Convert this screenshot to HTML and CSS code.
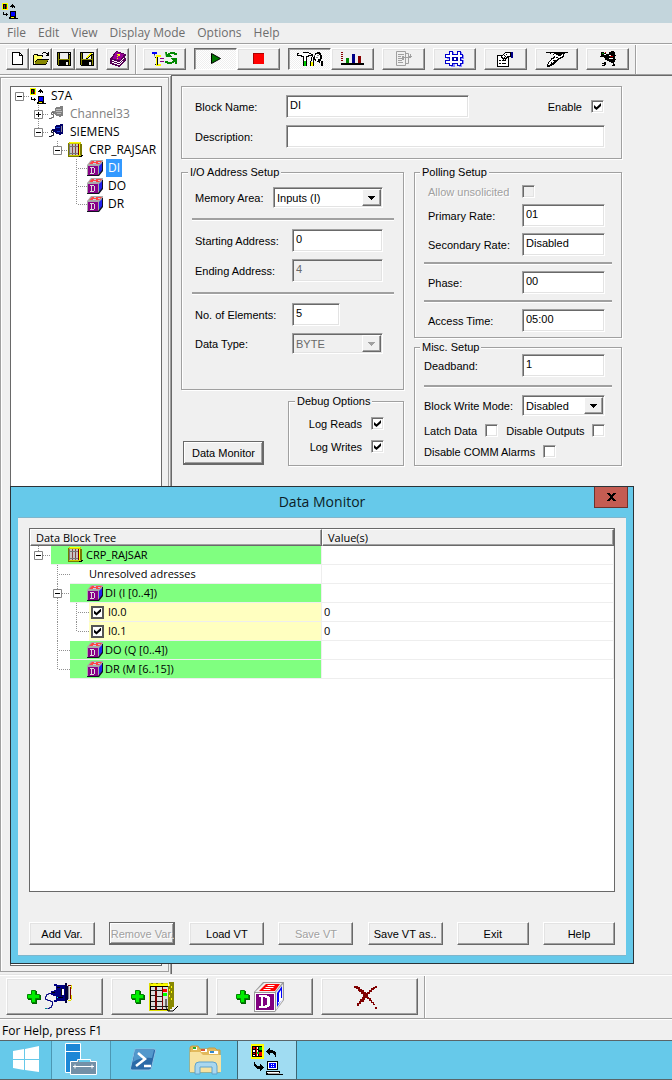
FILE: index.html
```html
<!DOCTYPE html>
<html lang="en">
<head>
<meta charset="utf-8">
<title>S7A Driver Configuration</title>
<meta name="viewport" content="width=device-width, initial-scale=1">
<link rel="stylesheet" href="styles.css">
</head>
<body>
<svg class="sprite" aria-hidden="true" shape-rendering="crispEdges">
  <symbol id="app16" viewBox="0 0 16 16">
    <path fill="#ff0" d="M0 0h6v7H0z"/><path d="M1 1h1v5H1zM3 2h1v4H3zM2 1h3v1H2z"/><path fill="#c00" d="M2 2h1v2H2zM4 4h1v2H4z"/><path fill="#080" d="M4 1h1v3H4zM2 4h1v2H2z"/>
    <path d="M8 3h1V2h1V1h1v1h1v1h1v2h-1V4h-1v1h-1V4H8zM1 9h1v2h2v-1h1v1h1v1H5v1H4v-1H1z"/>
    <path d="M8 8h6v5H8zM8 13h6v1H8zM7 14h7v1h2v1H7z"/><path fill="#00f" d="M9 9h4v4H9z"/><path fill="#ff0" d="M9 14h3v1H9z"/>
  </symbol>
  <symbol id="app32" viewBox="0 0 32 32">
    <path fill="#ff0" d="M0 0h13v15H0z"/><path d="M1 2h10v11H1z"/><path fill="#e00" d="M2 3h2v2H2zM5 3h1v9H5zM8 8h3v4H8zM2 9h2v1H2z"/><path fill="#fff" d="M2 6h2v2H2zM6 3h1v2H6zM6 6h1v2H6zM2 11h2v1H2zM6 10h1v2H6z"/><path fill="#0c0" d="M8 3h3v3H8zM6 8h2v2H6z"/>
    <path d="M15 7h1V6h1V5h1V4h1v2h3v1h2v1h1v5h-1v-2h-1v-1h-1V9h-3v2h-1v-1h-1V9h-1V8h-1zM3 18h1v2h1v1h1v1h3v-2h1v1h1v1h1v1h1v1h-1v1h-1v1h-1v1H9v-2H6v-1H5v-1H4v-1H3z"/>
    <path d="M16 17h11v9H16zM15 27h14v4H15zM29 30h3v1h-3z"/><path fill="#fff" d="M17 18h9v7h-9zM16 28h12v1H16z"/><path fill="#00f" d="M18 19h7v5h-7z"/><path fill="#fff" d="M20 20h1v1h-1zM22 20h1v1h-1zM20 22h1v1h-1zM22 22h1v1h-1z"/><path fill="#aaa" d="M17 29h12v1H17z"/>
  </symbol>
  <symbol id="plug" viewBox="0 0 16 16">
    <path fill="#000068" d="M6 2h1V1h4V0h3v10h-2v1h-2v-1H7V9H6V8H4V6H3V5h3z"/><path fill="#1a3cd0" d="M7 3h4v1H7zM8 7h3v1H8z"/><path fill="#889" d="M12 2h1v6h-1z"/><path fill="none" stroke="#112" d="M5 6.500H2.500V8.500H4.500V11.500H2.500V12.500H0"/>
  </symbol>
  <symbol id="plug-off" viewBox="0 0 16 16">
    <path fill="#808080" d="M6 2h1V1h4V0h3v10h-2v1h-2v-1H7V9H6V8H4V6H3V5h3z"/><path fill="#b8b8b8" d="M7 3h5v1H7zM7 5h6v1H7zM8 7h4v1H8z"/><path fill="none" stroke="#666" d="M5 6.500H2.500V8.500H4.500V11.500H2.500V12.500H0"/>
  </symbol>
  <symbol id="rack" viewBox="0 0 16 16">
    <path fill="#cc0" d="M1 0h12v14H1z"/><path fill="#ff0" d="M2 0h10v1H2zM11 2h1v11h-1z"/><path fill="#770" d="M12 2h2v11h-2zM0 1h1v14H0zM1 14h12v1H1z"/><path fill="#c4c4c4" d="M2 2h8v11H2z"/><path fill="#844" d="M4 2h1v11H4zM7 2h1v11H7z"/><path fill="#777" d="M2 4h8v1H2zM2 11h8v1H2zM1 2h1v11H1z"/><path fill="#700" d="M10 2h1v11h-1z"/><path d="M11 14h2v-1h2v1h-1v1h-3z"/>
  </symbol>
  <symbol id="block" viewBox="0 0 16 16">
    <path fill="#aaa" d="M0 5l4-5h12v10l-5 6H0z"/><path fill="#f44" d="M5 1h10l-3 3H2z"/><path fill="#ccd" d="M7 1h2v1H7zM6 3h3v1H6zM11 2h2v1h-2z"/><path fill="#22e" d="M12 6l4-4v8l-4 4z"/><path fill="#112" d="M15 2h1v9l-4 5H0v-1h11l4-5z"/><path fill="#808" d="M1 6h10v9H1z"/><path fill="#ddd" d="M3 7h4v1h1v5H7v1H3v-1h1V8H3z"/><path fill="#808" d="M5 8h2v5H5z"/>
  </symbol>
  <symbol id="new" viewBox="0 0 16 16"><path d="M2 1h8v1h1v1h1v1h1v10H2z"/><path fill="#fff" d="M3 2h6v3h3v8H3z"/><path fill="#fff" d="M10 3h1v1h-1z"/></symbol>
  <symbol id="open" viewBox="0 0 16 16"><path d="M0 4h1V3h4v1h5v2H9V5H4V4H1v9h1v-3h1V9h1V8h12v1h-1v2h-1v2h-1v1H0zM9 2h1V1h3v1h2V1h1v4h-3V4h1V3h-1V2h-3v1H9z"/><path fill="#ff6" d="M1 4h3v1h5v3H4v1H3v1H2v2H1z"/><path fill="#880" d="M4 9h11v1h-1v2h-1v1H2v-2h1v-1h1z"/></symbol>
  <symbol id="save" viewBox="0 0 16 16"><path d="M1 1h14v14H2v-1H1z"/><path fill="#880" d="M2 2h1v12H2zM13 4h1v10h-1zM3 8h10v1H3z"/><path fill="#eee" d="M4 2h8v6H4zM10 11h2v3h-2z"/><path fill="#eee" d="M13 2h1v1h-1z"/></symbol>
  <symbol id="save-as" viewBox="0 0 16 16"><use href="#save"/><path fill="#ff0" d="M8 5h1V4h1V3h1V2h2v1h-1v1h-1v1h-1v1H9v1H7V6h1z"/><path d="M7 7h2V6h1V5h1V4h1V3h1v1h-1v1h-1v1h-1v1H9v1H7z"/></symbol>
  <symbol id="book" viewBox="0 0 16 16"><path fill="#505" d="M6 0h2v1h3v1h3v1h2v2h-1v2h1v3h-1v1h-1v1h-1v1h-1v1h-1v1h-1v1H8v-1H5v-1H2v-1H0V7h1V6h1V5h1V3h1V2h1V1h1z"/><path fill="#909" d="M6 1h2v1h3v1h3v1h-1v2h-1v1h-1v2H9V9H6V8H3V6h1V4h1V2h1z"/><path fill="#fff" d="M2 9h2v1h3v1h3v-1h1V9h1V8h1V7h1v1h-1v1h-1v1h-1v1h-1v1H7v-1H4v-1H2zM2 11h2v1h3v1h3v-1h1v-1h1v-1h1v1h-1v1h-1v1h-1v1H7v-1H4v-1H2z"/><path fill="#ff0" d="M7 3h3v2H8v1H7V5h1V4H7zM7 7h1v1H7z"/></symbol>
  <symbol id="tree" viewBox="0 0 26 16"><path fill="#00f" d="M0 1h5v2H0z"/><path fill="#111" d="M2 3h1v11h3v-1H3V7h3V6H3z"/><path fill="#ff0" d="M4 4h5v2H6v7h3v2H4z"/><path d="M5 6h1v8H5z"/><path fill="#808" d="M8 7h4v1H8zM8 10h4v1H8z"/><path fill="#080" d="M13 1h2v2h1V2h2V1h5v1h2v2h-3V3h-4v1h1v1h1v1h-6zM19 7h6v6h-2v-2h-1v1h-2v1h-5v-1h-2v-2h3v1h4v-1h1V9h-1V8h-1z"/></symbol>
  <symbol id="play" viewBox="0 0 12 12"><path fill="#070" stroke="#000" d="M1.500 .5L10.500 5.500L1.500 10.500z"/></symbol>
  <symbol id="stop" viewBox="0 0 12 12"><path fill="#a00" d="M0 0h11v11H0z"/><path fill="#f00" d="M1 1h10v10H1z"/></symbol>
  <symbol id="tools" viewBox="0 0 26 16"><path d="M0 2h2v1h2V2h2V1h6v1h2v1h2v3h-1V5h-3v1h-2v4H6V6H4V5H0z"/><path fill="#fff" d="M1 3h3V2h8v1h2v1h-3v1H9v5H7V5H5V4H1z"/><path fill="#0c0" d="M6 10h4v5H6z"/><path d="M14 6h1v4h-1zM16 6h1v4h-1zM17 4h1V2h2V1h3v1h1v2h1v4h-1v2h2v5h-2v-3h-2v-1h-2v-1h-2V9h-1V5h1z"/><path fill="#fff" d="M19 3h3v1h1v4h-2v2h-2V8h-1V4h1zM15 6h1v4h-1zM23 10h1v2h-1z"/><path fill="#888" d="M20 4h2v1h-2zM19 6h2v1h-2z"/><path fill="#ff0" d="M13 11h4v4h-4z"/><path fill="none" stroke="#000" d="M6.500 10v5M9.500 10v5M13.500 10v5M16.500 10v5"/></symbol>
  <symbol id="chart" viewBox="0 0 24 14"><path fill="#800" d="M0 0h2v1H0zM0 2h2v1H0zM0 4h2v1H0zM0 6h2v1H0zM0 8h2v1H0zM17 4h3v7h-3z"/><path fill="#080" d="M5 6h3v5H5z"/><path fill="#008" d="M11 2h3v9h-3z"/><path d="M0 11h23v2H0z"/></symbol>
  <symbol id="transfer" viewBox="0 0 16 16"><path fill="none" stroke="#a0a0a0" d="M.5 .5h9v14h-9zM9.500 2.500h3v10h-3M2 3.500h6M2 5.500h3M2 7.500h5M2 9.500h4M2 11.500h5M6 6.500h6"/><path fill="#a0a0a0" d="M14 3h1v2h1v1h-1v1h-2V6h-1V5h2zM6 5h2v4H6z"/></symbol>
  <symbol id="grid" viewBox="0 0 20 16"><path fill="#88f" d="M5 1h4v3h4V1h4v3h2v4h-2v1h2v4h-2v3h-3v-3h-4v3H6v-3H2V9h3V8H2V5h3z"/><path fill="#00c" d="M4 0h4v3h4V0h4v3h2v4h-2v2h2v4h-2v2h-4v-2H8v2H4v-2H0V9h4V7H0V3h4z"/><path fill="#fff" d="M5 1h2v3h6V1h2v3h2v2h-2v4h2v2h-2v2h-2v-2H7v2H5v-2H1v-2h4V6H1V4h4z"/><path fill="#00a" d="M7 6h6v4H7z"/><path fill="#fff" d="M9 7h2v2H9z"/></symbol>
  <symbol id="props" viewBox="0 0 17 15"><path d="M0 3h12v12H0z"/><path fill="#fff" d="M1 4h10v10H1z"/><path fill="none" stroke="#000" d="M2 8.500h2M5 8.500h4M2 11.500h2M5 11.500h4"/><path d="M4 4h1V3h1V2h1V1h1V0h6v5h-3v1h-1v1H9v1H8V7H7v1H6V7H5V6H4z"/><path fill="#fff" d="M5 4h1V3h1V2h1V1h5v3h-3v1H9v1H8V5H7v1H6V5H5z"/><path d="M7 3h1v1H7zM9 2h1v1H9zM8 4h1v1H8z"/><path fill="#008" d="M14 0h2v6h-2z"/></symbol>
  <symbol id="pen" viewBox="0 0 22 15"><path d="M0 0h22v1h-3v1h-1v3h-1v1h-2v1h-2v1h-1v1h-1v1h-1v1H9v1H8v1H6v1H4v1H1v-3h1v-2h1V9h1V8h1V6h2V5h1V3H7V2H4V1H0z"/><path fill="#fff" d="M5 1h3v1h2v1h2v1h3V3h1V2h1v2h-1v1h-2v1h-2v1h-1v1H9v1H8v1H7v1H5v1H4v1H2v-1h1v-2h1V9h1V8h1V7h2V6h1V4H8V2H5z"/><path d="M10 5h2v1h-2zM7 8h2v1H7zM5 10h1v1H5z"/></symbol>
  <symbol id="bug" viewBox="0 0 16 16"><path d="M1 1h3v1h2v1h3V1h2V0h3v1h1v3h1v1h-1v6h-1v2h1v2h-3v-1h1v-2h-2v-1H9v-1H7V9H5V7H4V6H2V5H1zM0 5h3v1H0zM4 11h2v3H5v1H2v-1h2v-1H2v-1h2zM14 8h2v1h-2z"/><path fill="#fff" d="M4 3h2v1H4zM9 4h2v1H9zM9 7h4v1H9z"/><path fill="#c00" d="M10 5h3v1h-3zM5 1h1v1H5z"/><path fill="#090" d="M2 2h2v1H2z"/></symbol>
  <symbol id="plus" viewBox="0 0 14 14"><path fill="#060" d="M5 1h5v4h4v5h-4v4H5v-4H1V5h4z"/><path fill="#0e0" stroke="#080" d="M4.500 .5h4v4h4v4h-4v4h-4v-4h-4v-4h4z"/></symbol>
  <symbol id="plug-big" viewBox="0 0 28 27"><path fill="#000080" d="M9 1h3v1h9v16h-9v1H9v-2h2v-4H8v-1H6V8h3V7h2V3H9z"/><path fill="#00003c" d="M20 0h2v3h1v14h-1v3h-2z"/><path d="M12 4h3v1h-3zM12 14h6v1h-6zM7 9h3v1H7z"/><path fill="#fff" d="M17 6h2v6h-2z"/><path fill="#111" d="M16 5h1v8h-1z"/><path fill="#888" d="M23 3h1v13h-1z"/><path fill="#ddd" d="M24 4h1v12h-1z"/><path fill="#700" d="M25 4h1v12h-1zM23 2h3v1h-3z"/><path fill="#dd0" d="M26 2h1v4h-1zM26 12h1v5h-1zM23 17h3v1h-3z"/><path fill="#0ff" d="M12 14h1v1h-1z"/><path fill="#088" d="M0 25h2v1H0z"/><path fill="none" stroke="#000080" d="M7 10.500H3.500v1H1.500v2h-1v3h2v1h3v1h2v4h-1v2h-2v1h-2"/></symbol>
  <symbol id="rack-big" viewBox="0 0 30 30"><path fill="#dd0" d="M0 1h19v28H0z"/><path fill="#880" d="M19 4h6v21h-2v2h-2v2h-2zM20 0h5v4h-5zM2 1h2v1H2zM7 1h2v1H7zM12 1h2v1h-2z"/><path fill="#ff0" d="M2 2h17v2H2zM20 2h1v2h-1zM22 4h1v2h-1zM22 9h1v2h-1zM20 7h1v2h-1zM20 13h1v2h-1zM22 16h1v2h-1z"/><path d="M1 4h18v24H1z"/><path fill="#ddd" d="M2 5h5v22H2zM8 5h5v22H8zM14 5h5v22h-5z"/><path fill="#700" d="M6 5h2v23H6zM13 5h1v23h-1z"/><path fill="#222" d="M2 8h11v1H2zM2 13h4v1H2zM2 19h4v1H2zM2 24h17v1H2zM8 14h5v1H8zM8 19h5v1H8z"/><path fill="#f00" d="M14 7h4v3h-4z"/><path fill="#0f0" d="M14 11h4v3h-4z"/><path fill="none" stroke="#000" d="M17 17v8l2 4h5l5-5"/></symbol>
  <symbol id="block-big" viewBox="0 0 30 30"><path fill="#999" d="M0 10L9 0h21v18l-9 12H0z"/><path fill="#eee" d="M1 10L10 1h18l-7 9z"/><path fill="#f00" d="M5 9l7-7h14l-5 7z"/><path fill="#fff" d="M14 3h7l-1 1h-7zM12 5h8l-1 1h-8zM10 7h7l-1 1h-7z"/><path fill="#eee" d="M22 10l7-8v16l-7 10z"/><path fill="#00f" d="M23 11l5-7v13l-5 8z"/><path fill="#fff" d="M25 11l2-3v8h1v2l-4 4v-2h1z"/><path fill="#fff" d="M1 11h20v18H1z"/><path fill="#800080" d="M2 12h18v16H2z"/><path fill="#fff" d="M5 13h8v1h2v1h1v9h-1v1h-2v1H5v-2h2v-9H5zM9 15v9h2v-1h2v-7h-2v-1z" fill-rule="evenodd"/></symbol>
  <symbol id="cross" viewBox="0 0 24 24"><path fill="#800000" d="M1 1h4v1h2v2h2v1h2v2h2v1h1V7h2V5h2V3h2V2h2V1h2v2h-2v1h-1v1h-2v2h-2v2h-2v3h1v1h2v2h1v2h2v2h1v1h-2v-2h-2v-2h-2v-2h-2v-1h-2v2h-1v2H8v2H6v2H4v-3h2v-2h1v-2h2v-2h1V9H8V7H6V6H5V4H3V3H1zM22 22h2v2h-2z"/></symbol>
  <symbol id="windows" viewBox="0 0 28 28"><g fill="#fff" shape-rendering="auto"><path d="M1 5l11-2v10H1zM13 3l14-3v13H13zM1 14h11v10L1 22zM13 14h14v12l-14-2z"/></g></symbol>
  <symbol id="server" viewBox="0 0 33 34"><path fill="#1b87d6" stroke="#fff" d="M.5 .5h15v29H.5z"/><path stroke="#fff" d="M1 8.500h15"/><path fill="#7390a7" stroke="#fff" d="M12.500 18.500v-2h13v2h6v13h-26v-13z"/><path fill="#66c9ea" d="M14 17h11v2H14z"/><path fill="none" stroke="#fff" d="M8 23.500h21M10 21.500v4M27 21.500v4"/></symbol>
  <symbol id="shell" viewBox="0 0 28 24"><g shape-rendering="auto"><path fill="#2b6aa8" stroke="#8cc0e4" d="M6 1h19q2 0 1.500 2l-4 17q-.5 2-2.500 2H3q-2 0-1.500-2l4-17q.5-2 .5-2z"/><path fill="#5298cc" d="M6 2h19l-2 8Q12 9 4 14z"/><path fill="none" stroke="#fff" stroke-width="2.500" d="M9 5l7 6-9 7M15 18h7"/></g></symbol>
  <symbol id="folders" viewBox="0 0 34 30"><g shape-rendering="auto"><path fill="#e2b95c" stroke="#c79c42" d="M1 3q0-2 2-2h6l2 3h7l2-1h6l2 2h3v22H1z"/><path fill="#fff" d="M4 2h4v3H4zM12 4h6v3h-6zM20 6h9v3h-9z"/><path fill="#2a3" d="M4 2h3v2H4z"/><path fill="#d53" d="M12 4h4v2h-4z"/><path fill="#38c" d="M21 6h4v2h-4z"/><path fill="#f7e2a0" d="M1 7h10l3 3h18v17H1z"/><path fill="#a9d7ef" stroke="#5fa3cc" d="M6 29v-8q0-4 4-4h14q4 0 4 4v8h-5v-7H11v7z"/></g></symbol>
  <symbol id="minus-box" viewBox="0 0 9 9"><path fill="#fff" stroke="#848484" d="M.5 .5h8v8h-8z"/><path d="M2 4h5v1H2z"/></symbol>
  <symbol id="plus-box" viewBox="0 0 9 9"><path fill="#fff" stroke="#848484" d="M.5 .5h8v8h-8z"/><path d="M2 4h5v1H2zM4 2h1v5H4z"/></symbol>
</svg>

<header class="titlebar"><svg class="i16"><use href="#app16"/></svg></header>
<nav class="menu">
  <button>File</button><button>Edit</button><button>View</button><button>Display Mode</button><button>Options</button><button>Help</button>
</nav>
<div class="toolbar" role="toolbar" aria-label="Main toolbar">
  <div class="group">
    <button class="tool" aria-label="New"><svg class="i16"><use href="#new"/></svg></button>
    <button class="tool" aria-label="Open"><svg class="i16"><use href="#open"/></svg></button>
    <button class="tool" aria-label="Save"><svg class="i16"><use href="#save"/></svg></button>
    <button class="tool" aria-label="Save as"><svg class="i16"><use href="#save-as"/></svg></button>
  </div>
  <div class="group"><button class="tool" aria-label="Manual"><svg class="i16"><use href="#book"/></svg></button></div>
  <div class="bar-end"></div>
  <div class="group"><button class="tool wide" aria-label="Refresh tree"><svg width="26" height="16"><use href="#tree"/></svg></button></div>
  <div class="group">
    <button class="tool wide pressed" aria-label="Run"><svg width="12" height="12"><use href="#play"/></svg></button>
    <button class="tool wide" aria-label="Stop"><svg width="12" height="12"><use href="#stop"/></svg></button>
  </div>
  <div class="group">
    <button class="tool wide pressed" aria-label="Configure"><svg width="26" height="16"><use href="#tools"/></svg></button>
    <button class="tool wide" aria-label="Statistics"><svg width="24" height="14"><use href="#chart"/></svg></button>
  </div>
  <button class="tool wide" aria-label="Template" disabled><svg class="i16"><use href="#transfer"/></svg></button>
  <button class="tool wide" aria-label="Grid"><svg width="20" height="16"><use href="#grid"/></svg></button>
  <button class="tool wide" aria-label="Properties"><svg width="17" height="15"><use href="#props"/></svg></button>
  <button class="tool wide" aria-label="Sign"><svg width="22" height="15"><use href="#pen"/></svg></button>
  <button class="tool wide" aria-label="Debug"><svg class="i16"><use href="#bug"/></svg></button>
  <div class="bar-end"></div>
</div>

<div class="workspace">
  <aside class="side">
    <div class="frame">
      <ul class="tree">
        <li><svg width="19" height="18"><path class="dots" d="M13 9.500h6"/><use href="#minus-box" x="4" y="5" width="9" height="9"/></svg><svg class="i16"><use href="#app16"/></svg><span>S7A</span></li>
        <li><svg width="38" height="18"><path class="dots" d="M27.500 0v18M32 9.500h6"/><use href="#plus-box" x="23" y="5" width="9" height="9"/></svg><svg class="i16"><use href="#plug-off"/></svg><span class="off">Channel33</span></li>
        <li><svg width="38" height="18"><path class="dots" d="M27.500 0v8M32 9.500h6"/><use href="#minus-box" x="23" y="5" width="9" height="9"/></svg><svg class="i16"><use href="#plug"/></svg><span>SIEMENS</span></li>
        <li><svg width="57" height="18"><path class="dots" d="M46.500 0v8M51 9.500h6"/><use href="#minus-box" x="42" y="5" width="9" height="9"/></svg><svg class="i16"><use href="#rack"/></svg><span>CRP_RAJSAR</span></li>
        <li><svg width="76" height="18"><path class="dots" d="M65.500 0v18M67 9.500h9"/></svg><svg class="i16"><use href="#block"/></svg><span class="selected">DI</span></li>
        <li><svg width="76" height="18"><path class="dots" d="M65.500 0v18M67 9.500h9"/></svg><svg class="i16"><use href="#block"/></svg><span>DO</span></li>
        <li><svg width="76" height="18"><path class="dots" d="M65.500 0v10M67 9.500h9"/></svg><svg class="i16"><use href="#block"/></svg><span>DR</span></li>
      </ul>
    </div>
  </aside>

  <main class="main">
    <form class="form">
      <div class="box identity">
        <div class="row">
          <label class="name" for="bname">Block Name:</label><input class="field short" id="bname" value="DI">
          <label class="push" for="enable">Enable</label><input type="checkbox" id="enable" checked>
        </div>
        <div class="row"><label class="name" for="desc">Description:</label><input class="field" id="desc"></div>
      </div>
      <div class="columns">
        <div class="col">
          <fieldset class="box io">
            <legend>I/O Address Setup</legend>
            <div class="row"><label class="name tight" for="area">Memory Area:</label><span class="combo"><select id="area"><option>Inputs (I)</option></select></span></div>
            <hr>
            <div class="row"><label class="name" for="start">Starting Address:</label><input class="field" id="start" value="0"></div>
            <div class="row"><label class="name" for="end">Ending Address:</label><input class="field" id="end" value="4" disabled></div>
            <hr>
            <div class="row"><label class="name" for="count">No. of Elements:</label><input class="field tiny" id="count" value="5"></div>
            <div class="row"><label class="name" for="type">Data Type:</label><span class="combo"><select id="type" disabled><option>BYTE</option></select></span></div>
          </fieldset>
          <div class="under">
            <button type="button" class="btn default">Data Monitor</button>
            <fieldset class="box debug">
              <legend>Debug Options</legend>
              <div class="row"><label for="reads">Log Reads</label><input type="checkbox" id="reads" checked></div>
              <div class="row"><label for="writes">Log Writes</label><input type="checkbox" id="writes" checked></div>
            </fieldset>
          </div>
        </div>
        <div class="col right">
          <fieldset class="box polling">
            <legend>Polling Setup</legend>
            <div class="row check"><label class="name off" for="unsol">Allow unsolicited</label><input type="checkbox" id="unsol" disabled></div>
            <div class="row"><label class="name" for="prim">Primary Rate:</label><input class="field" id="prim" value="01"></div>
            <div class="row"><label class="name" for="sec">Secondary Rate:</label><input class="field" id="sec" value="Disabled"></div>
            <hr>
            <div class="row"><label class="name" for="phase">Phase:</label><input class="field" id="phase" value="00"></div>
            <hr>
            <div class="row"><label class="name" for="access">Access Time:</label><input class="field" id="access" value="05:00"></div>
          </fieldset>
          <fieldset class="box misc">
            <legend>Misc. Setup</legend>
            <div class="row"><label class="name" for="dead">Deadband:</label><input class="field" id="dead" value="1"></div>
            <hr>
            <div class="row"><label class="name" for="bwm">Block Write Mode:</label><span class="combo"><select id="bwm"><option>Disabled</option></select></span></div>
            <div class="row check"><label for="latch">Latch Data</label><input type="checkbox" id="latch"><label class="push" for="outs">Disable Outputs</label><input type="checkbox" id="outs"></div>
            <div class="row check"><label for="alarms">Disable COMM Alarms</label><input type="checkbox" id="alarms"></div>
          </fieldset>
        </div>
      </div>
    </form>
  </main>
</div>

<div class="actions" role="toolbar" aria-label="Add objects">
  <button class="big" aria-label="Add channel"><svg width="14" height="14"><use href="#plus"/></svg><svg width="28" height="27"><use href="#plug-big"/></svg></button>
  <button class="big" aria-label="Add device"><svg width="14" height="14"><use href="#plus"/></svg><svg width="30" height="30"><use href="#rack-big"/></svg></button>
  <button class="big" aria-label="Add block"><svg width="14" height="14"><use href="#plus"/></svg><svg width="30" height="30"><use href="#block-big"/></svg></button>
  <button class="big" aria-label="Delete"><svg width="24" height="24"><use href="#cross"/></svg></button>
  <div class="bar-end"></div>
</div>
<footer class="status">For Help, press F1</footer>
<nav class="taskbar">
  <button class="start" aria-label="Start"><svg width="28" height="28"><use href="#windows"/></svg></button>
  <button class="running" aria-label="Server Manager"><svg width="33" height="34"><use href="#server"/></svg></button>
  <button aria-label="PowerShell"><svg width="28" height="24"><use href="#shell"/></svg></button>
  <button aria-label="File Explorer"><svg width="34" height="30"><use href="#folders"/></svg></button>
  <button class="active" aria-label="S7A"><svg width="32" height="32"><use href="#app32"/></svg></button>
</nav>

<section class="dialog" role="dialog" aria-labelledby="dlg-title">
  <header class="dialog-head"><h1 id="dlg-title">Data Monitor</h1><button class="close" aria-label="Close"><svg width="9" height="8" shape-rendering="crispEdges"><path d="M0 0h3v1h1v1h1V1h1V0h3v1H8v1H7v1H6v2h1v1h1v1h1v1H6V7H5V6H4v1H3v1H0V7h1V6h1V5h1V3H2V2H1V1H0z"/></svg></button></header>
  <div class="client">
    <div class="list">
      <table>
        <colgroup><col class="c1"><col></colgroup>
        <thead><tr><th>Data Block Tree</th><th>Value(s)</th></tr></thead>
        <tbody>
          <tr><td><div class="node"><svg width="21" height="19"><path class="dots" d="M8.500 0v5M13 9.500h8"/><use href="#minus-box" x="4" y="5" width="9" height="9"/></svg><span class="cell green"><svg class="i16"><use href="#rack"/></svg>CRP_RAJSAR</span></div></td><td></td></tr>
          <tr><td><div class="node"><svg width="40" height="19"><path class="dots" d="M27.500 0v19M29 9.500h11"/></svg><span class="cell plain">Unresolved adresses</span></div></td><td></td></tr>
          <tr><td><div class="node"><svg width="40" height="19"><path class="dots" d="M27.500 0v19M32 9.500h8"/><use href="#minus-box" x="23" y="5" width="9" height="9"/></svg><span class="cell green"><svg class="i16"><use href="#block"/></svg>DI (I [0..4])</span></div></td><td></td></tr>
          <tr><td><div class="node"><svg width="59" height="19"><path class="dots" d="M27.500 0v19M46.500 0v19M48 9.500h11"/></svg><label class="cell yellow"><input type="checkbox" checked>I0.0</label></div></td><td>0</td></tr>
          <tr><td><div class="node"><svg width="59" height="19"><path class="dots" d="M27.500 0v19M46.500 0v10M48 9.500h11"/></svg><label class="cell yellow"><input type="checkbox" checked>I0.1</label></div></td><td>0</td></tr>
          <tr><td><div class="node"><svg width="40" height="19"><path class="dots" d="M27.500 0v19M29 9.500h11"/></svg><span class="cell green"><svg class="i16"><use href="#block"/></svg>DO (Q [0..4])</span></div></td><td></td></tr>
          <tr><td><div class="node"><svg width="40" height="19"><path class="dots" d="M27.500 0v10M29 9.500h11"/></svg><span class="cell green"><svg class="i16"><use href="#block"/></svg>DR (M [6..15])</span></div></td><td></td></tr>
        </tbody>
      </table>
    </div>
    <div class="buttons">
      <button class="btn s">Add Var.</button><button class="btn s default" disabled>Remove Var.</button><button class="btn m">Load VT</button><button class="btn m" disabled>Save VT</button><button class="btn m">Save VT as..</button><button class="btn">Exit</button><button class="btn">Help</button>
    </div>
  </div>
</section>
</body>
</html>
```

FILE: styles.css
```css
:root {
  --face: #f0f0f0;
  --light: #e3e3e3;
  --shade: #a0a0a0;
  --dark: #696969;
  --sky: #66c9ea;
  --ui: "Open Sans", "Noto Sans", sans-serif;
  --form: "Liberation Sans", Arial, sans-serif;
}
* { box-sizing: border-box; }
body {
  margin: 0;
  min-height: 100vh;
  display: flex;
  flex-direction: column;
  position: relative;
  background: var(--face);
  color: #000;
  font: 11px/14px var(--form);
}
button, input, select { font: inherit; color: inherit; margin: 0; }
svg { flex: none; display: block; }
.sprite { position: absolute; width: 0; height: 0; }
.i16 { width: 16px; height: 16px; }
.dots { fill: none; stroke: #909090; stroke-dasharray: 1 1; shape-rendering: crispEdges; }

.titlebar { height: 23px; padding: 3px 2px; background: #c3d5dc; }
.menu { display: flex; gap: 12px; height: 20px; padding: 0 7px; }
.menu button { border: 0; padding: 0; background: none; color: #6d6d6d; font: 12px/20px var(--ui); }

.toolbar, .actions {
  display: flex;
  align-items: center;
  gap: 8px;
  padding-left: 6px;
  border-top: 1px solid var(--shade);
  box-shadow: inset 0 1px #fff;
}
.toolbar { height: 31px; }
.group { display: flex; }
.tool, .big, .btn {
  display: flex;
  align-items: center;
  justify-content: center;
  padding: 0;
  border: 1px solid;
  border-color: #fff var(--dark) var(--dark) #fff;
  background: var(--face);
  box-shadow: inset -1px -1px var(--shade), inset 1px 1px var(--light);
}
.tool { width: 23px; height: 22px; }
.wide { width: 43px; }
.pressed {
  border-color: var(--dark) #fff #fff var(--dark);
  box-shadow: inset 1px 1px var(--shade);
  background: repeating-conic-gradient(#fff 0 25%, #efefef 0 50%) 0 0 / 2px 2px;
}
.bar-end { align-self: stretch; width: 2px; margin: 1px -2px 0; background: linear-gradient(90deg, var(--shade) 50%, #fff 50%); }

.workspace { flex: 1; display: flex; border-top: 1px solid var(--shade); }
.side { display: flex; width: 172px; padding: 2px 2px 2px 0; border-right: 1px solid var(--dark); box-shadow: inset 0 1px #fff, inset -1px 0 var(--shade); }
.frame { flex: 1; display: flex; padding: 8px 6px 5px 9px; border: 1px solid var(--shade); box-shadow: inset 1px 1px #fff; }
.tree { flex: 1; margin: 0; padding: 0; list-style: none; background: #fff; border: 1px solid var(--dark); font: 12px/18px var(--ui); }
.tree li { display: flex; align-items: center; height: 18px; }
.tree span { margin-left: 3px; padding: 0 2px; }
.off { color: var(--shade); text-shadow: 1px 1px #fff; }
.tree .off { color: #808080; text-shadow: none; }
.selected { background: #3399ff; color: #fff; }

.main { flex: 1; padding: 10px 9px; border-top: 1px solid var(--dark); }
.form { max-width: 441px; }
.box { min-width: 0; margin: 0; border: 1px solid var(--shade); box-shadow: 1px 1px #fff, inset 1px 1px #fff; }
.row { display: flex; align-items: center; white-space: nowrap; }
.identity { display: grid; gap: 7px; padding: 8px 16px 10px 13px; }
.name { flex: none; width: 91px; }
.push { margin-left: auto; }
.identity .short { flex: 0 1 183px; }
.field, .combo {
  flex: 1;
  min-width: 0;
  height: 23px;
  border: 1px solid;
  border-color: var(--shade) #fff #fff var(--shade);
  border-radius: 0;
  background: #fff;
  box-shadow: inset 1px 1px var(--dark), inset -1px -1px var(--light);
}
.field { padding: 1px 3px 5px 3px; }
.field:disabled { background: var(--face); color: var(--dark); }
.combo { display: grid; height: 21px; }
.combo select { grid-area: 1 / 1; appearance: none; min-width: 0; border: 0; padding: 0 20px 0 3px; background: none; opacity: 1; }
.combo:has(:disabled) { background: var(--face); color: var(--dark); }
.combo::after {
  content: "";
  grid-area: 1 / 1;
  justify-self: end;
  width: 17px;
  margin: 1px;
  border: 1px solid;
  border-color: #fff var(--dark) var(--dark) #fff;
  background: conic-gradient(from 315deg at 50% 100%, #000 90deg, transparent 0) center / 7px 4px no-repeat, var(--face);
  box-shadow: inset -1px -1px var(--shade);
  transform: none;
  pointer-events: none;
}
.combo::after { background: conic-gradient(from 135deg at 50% 100%, #000 90deg, transparent 0) center / 7px 4px no-repeat, var(--face); }
.combo::after { background: linear-gradient(#000, #000) 50% 6px / 7px 1px no-repeat, linear-gradient(#000, #000) 50% 7px / 5px 1px no-repeat, linear-gradient(#000, #000) 50% 8px / 3px 1px no-repeat, linear-gradient(#000, #000) 50% 9px / 1px 1px no-repeat, var(--face); }
.combo:has(:disabled)::after { background: linear-gradient(#a0a0a0, #a0a0a0) 50% 6px / 7px 1px no-repeat, linear-gradient(#a0a0a0, #a0a0a0) 50% 7px / 5px 1px no-repeat, linear-gradient(#a0a0a0, #a0a0a0) 50% 8px / 3px 1px no-repeat, linear-gradient(#a0a0a0, #a0a0a0) 50% 9px / 1px 1px no-repeat, var(--face); }
input[type="checkbox"] {
  appearance: none;
  flex: none;
  display: grid;
  place-items: center;
  width: 13px;
  height: 13px;
  border: 1px solid;
  border-color: var(--shade) #fff #fff var(--shade);
  background: #fff;
  box-shadow: inset 1px 1px var(--dark), inset -1px -1px var(--light);
}
input[type="checkbox"]:disabled { background: var(--face); }
input[type="checkbox"]:checked::before { content: ""; width: 7px; height: 7px; background: #000; clip-path: polygon(0 28%, 36% 60%, 100% 0, 100% 42%, 36% 100%, 0 70%); }
.identity input[type="checkbox"] { margin: 0 1px 0 9px; }

.columns { display: grid; grid-template-columns: 223fr 208fr; gap: 10px; margin-top: 6px; }
.col { display: flex; flex-direction: column; gap: 4px; min-width: 0; }
.right { gap: 2px; }
legend { margin-left: -4px; padding: 0 2px; background: var(--face); white-space: nowrap; position: relative; }
hr { width: auto; height: 3px; margin: 10px 0 8px; border: 0; background: linear-gradient(var(--shade) 2px, #fff 2px); }
.io { padding: 8px 9px 35px 10px; }
.io .row { padding: 0 11px 0 3px; }
.io .name { width: 97px; }
.io .tight { width: 78px; }
.io .tiny { flex: 0 1 48px; }
.io .row + .row { margin-top: 7px; }
.under { display: flex; align-items: flex-end; justify-content: space-between; padding-left: 2px; }
.debug { width: 116px; display: grid; gap: 10px; padding: 9px 19px 12px 10px; }
.debug .row { justify-content: flex-end; gap: 9px; height: 13px; }
.polling { padding: 6px 9px 5px; }
.polling hr { margin: 6px 0; }
.polling .row, .misc .row { padding: 0 7px 0 4px; }
.polling .name { width: 94px; }
.polling .row + .row { margin-top: 6px; }
.misc { padding: 0 9px 7px; }
.misc hr { margin: 8px 0 7px; }
.misc .row { padding-left: 0; }
.misc .name { width: 98px; }
.check { height: 13px; gap: 8px; }
.polling .check { gap: 0; }
.misc .check { margin-top: 8px; }

.btn { min-width: 72px; height: 23px; white-space: nowrap; }
.under .btn { width: 81px; height: 24px; margin-bottom: 1px; }
.btn:disabled { color: var(--shade); text-shadow: 1px 1px #fff; }
.btn.default { border-color: var(--dark); box-shadow: inset -1px -1px var(--dark), inset 1px 1px #fff, inset -2px -2px var(--shade); }

.actions { height: 45px; border-bottom: 1px solid var(--shade); border-top-color: var(--light); }
.big { width: 97px; height: 37px; gap: 4px; padding-right: 9px; }
.status { height: 21px; padding-left: 2px; box-shadow: inset 0 1px #fff; font: 12px/24px var(--ui); }

.taskbar { display: flex; height: 40px; background: var(--sky); border: 1px solid #5a6468; border-width: 1px 0; }
.taskbar button { display: flex; align-items: center; justify-content: center; width: 63px; padding: 0; border: 0; background: none; }
.taskbar .start { width: 51px; }
.taskbar .running { width: 60px; background: #7ad0ee; border: solid #4b97b3; border-width: 0 1px; }
.taskbar .active { width: 60px; background: #a0dcf2; border: solid #3d6673; border-width: 0 1px; }

.dialog {
  position: absolute;
  left: 10px;
  top: 486px;
  width: 624px;
  max-width: calc(100% - 20px);
  padding: 0 7px 7px;
  border: 1px solid #2b3338;
  background: var(--sky);
}
.dialog-head { display: grid; grid-template-columns: 1fr auto; height: 30px; }
h1 { grid-area: 1 / 1 / 2 / 3; margin: 0; text-align: center; font: 14px/29px var(--ui); color: #0b1d26; }
.close { grid-area: 1 / 2; display: grid; place-items: center; width: 34px; height: 21px; margin-right: -2px; padding: 0; border: 1px solid #6e322c; border-top: 0; background: #c45c52; }
.client { padding: 10px 11px; border: solid #7fb6cc; border-width: 1px 0; background: var(--face); }
.list { min-height: 364px; border: 1px solid var(--dark); background: #fff; }
table { width: 100%; border-collapse: separate; border-spacing: 0; table-layout: fixed; font: 11px/16px var(--ui); }
.c1 { width: 50%; }
th { height: 17px; padding: 0 5px; text-align: left; font-weight: 400; background: var(--face); border: 1px solid; border-color: #fff var(--dark) var(--dark) #fff; box-shadow: inset -1px -1px var(--shade); line-height: 15px; }
td { height: 19px; padding: 0 2px; border-bottom: 1px solid #eee; border-right: 1px solid #eee; line-height: 18px; }
td:first-child { padding: 0; border-bottom: 0; }
.node { display: flex; height: 19px; }
.cell { flex: 1; display: flex; align-items: center; gap: 2px; padding-left: 17px; border-bottom: 1px solid #eee; }
.green { background: #80ff80; }
.yellow { background: #ffffc0; padding-left: 2px; gap: 4px; }
.plain { padding-left: 19px; }
.yellow input[type="checkbox"] { border: 2px solid #555; box-shadow: none; }
.buttons { display: flex; justify-content: space-between; margin-top: 30px; }
.s { min-width: 66px; width: 66px; overflow: hidden; }
.m { width: 75px; }
```
